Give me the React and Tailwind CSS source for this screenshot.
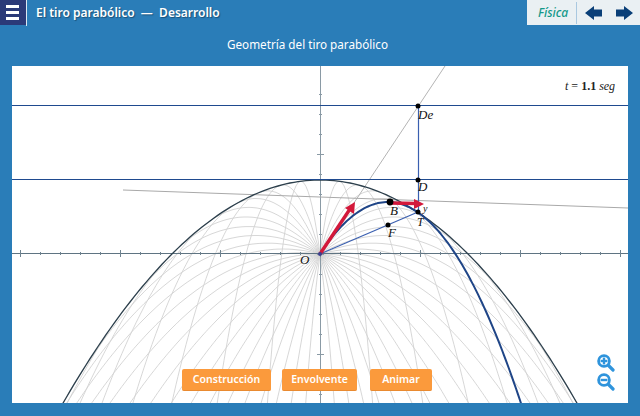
const OX = 320;
const OY = 254;
const H = 74;

// trajectory from the origin, launch angle in degrees
function trajectory(deg, dir = 1) {
  const t = (deg * Math.PI) / 180;
  const c = Math.cos(t);
  const pts = [];
  for (let x = 0; x <= 320; x += 2) {
    const y = x * Math.tan(t) - (x * x) / (4 * H * c * c);
    const py = OY - y;
    pts.push(`${(OX + dir * x).toFixed(1)} ${py.toFixed(1)}`);
    if (py > 410) break;
  }
  return 'M' + pts.join('L');
}

function envelope() {
  const pts = [];
  for (let x = -262; x <= 262; x += 4) {
    pts.push(`${OX + x} ${(OY - H + (x * x) / (4 * H)).toFixed(1)}`);
  }
  return 'M' + pts.join('L');
}

const angles = [];
for (let a = -82.5; a < 90; a += 7.5) angles.push(a);

const xTicks = [];
for (let x = 20; x <= 620; x += 20) xTicks.push(x);
const yTicks = [];
for (let y = 94; y <= 403; y += 20) yTicks.push(y);

function Parabolas() {
  return (
    <svg viewBox="12 66 616 337" className="block w-full h-full">
      {angles.map((a) => (
        <g key={a} fill="none" stroke="#d2d2d2" strokeWidth="0.9">
          <path d={trajectory(a, 1)} />
          <path d={trajectory(a, -1)} />
        </g>
      ))}
      <line x1="320.5" y1="66" x2="320.5" y2="403" stroke="#8a9aa5" strokeWidth="1" />
      <line x1="12" y1="253.5" x2="628" y2="253.5" stroke="#5f7482" strokeWidth="1" />
      {xTicks.map((x) => (
        <line key={x} x1={x + 0.5} x2={x + 0.5} y1={(x - 20) % 100 === 0 ? 250 : 252} y2={(x - 20) % 100 === 0 ? 257 : 255} stroke="#6f8390" strokeWidth="1" />
      ))}
      {yTicks.map((y) => (
        <line key={y} y1={y + 0.5} y2={y + 0.5} x1={(y - 54) % 100 === 0 ? 317 : 319} x2={(y - 54) % 100 === 0 ? 324 : 322} stroke="#8a9aa5" strokeWidth="1" />
      ))}

      <line x1="320" y1="254" x2="445" y2="66" stroke="#b4b4b4" strokeWidth="1" />
      <line x1="123" y1="190" x2="628" y2="208" stroke="#a9a9a9" strokeWidth="1" />

      <path d={envelope()} fill="none" stroke="#2c3f4c" strokeWidth="1.3" />

      <line x1="12" y1="105.5" x2="628" y2="105.5" stroke="#1f4a8f" strokeWidth="1.2" />
      <line x1="12" y1="179.5" x2="628" y2="179.5" stroke="#1f4a8f" strokeWidth="1.2" />
      <line x1="418.5" y1="106" x2="418.5" y2="212" stroke="#3a5fb0" strokeWidth="1.2" />
      <line x1="320" y1="254" x2="418" y2="212" stroke="#3a5fb0" strokeWidth="1.2" />

      <path d={trajectory(56.9)} fill="none" stroke="#1f4587" strokeWidth="2" />

      <line x1="320" y1="254" x2="350" y2="209" stroke="#d3183a" strokeWidth="3.4" />
      <path d="M355 202L354 214L345 208Z" fill="#d3183a" />
      <line x1="390" y1="203" x2="416" y2="203.5" stroke="#d3183a" strokeWidth="3.4" />
      <path d="M424 204L414 199L414 209Z" fill="#d3183a" />

      <circle cx="320" cy="254" r="2" fill="#3b3f8f" />
      <circle cx="390" cy="202" r="3.4" fill="#000" />
      <circle cx="418" cy="106" r="2.5" fill="#000" />
      <circle cx="418" cy="180" r="2.5" fill="#000" />
      <circle cx="418" cy="212" r="2.5" fill="#000" />
      <circle cx="388" cy="225" r="2.5" fill="#000" />

      <g fontFamily="'Liberation Serif', serif" fontStyle="italic" fontSize="13" fill="#111">
        <text x="300" y="264">O</text>
        <text x="418" y="119">De</text>
        <text x="418" y="191">D</text>
        <text x="390" y="215">B</text>
        <text x="388" y="237">F</text>
        <text x="417" y="226" fontSize="12">T</text>
        <text x="423" y="212" fontSize="10">y</text>
      </g>
      <text x="565" y="90" fontFamily="'Liberation Serif', serif" fontSize="12" fill="#222">
        <tspan fontStyle="italic">t</tspan>
        <tspan> = </tspan>
        <tspan fontWeight="700">1.1</tspan>
        <tspan fontStyle="italic"> seg</tspan>
      </text>
    </svg>
  );
}

function ZoomIcon({ plus }) {
  return (
    <svg width="18" height="18" viewBox="0 0 18 18" className="block">
      <circle cx="7" cy="7" r="5.4" fill="#fff" stroke="#2f94dc" strokeWidth="2.8" />
      <line x1="11.5" y1="11.5" x2="16" y2="16" stroke="#2f94dc" strokeWidth="3.2" strokeLinecap="round" />
      <line x1="3.6" y1="7" x2="10.4" y2="7" stroke="#2f94dc" strokeWidth="2.4" />
      {plus && <line x1="7" y1="3.6" x2="7" y2="10.4" stroke="#2f94dc" strokeWidth="2.4" />}
    </svg>
  );
}

function OrangeButton({ label, className }) {
  return (
    <button className={`h-[22px] rounded-[2px] bg-[#fb9a3c] text-white text-[10.5px] font-semibold border-b border-[#e98a30] ${className}`}>
      {label}
    </button>
  );
}

export default function App() {
  return (
    <div className="w-[640px] h-[416px] flex flex-col bg-[#2a7db8] overflow-hidden font-['Noto_Sans',sans-serif]">
      {/* Top bar */}
      <div className="h-[25px] flex items-stretch">
        <div className="w-[26px] bg-[#2b3a78] flex flex-col justify-center gap-[3px] pl-[6px]">
          <span className="block w-[13px] h-[3px] bg-white" />
          <span className="block w-[13px] h-[3px] bg-white" />
          <span className="block w-[13px] h-[3px] bg-white" />
        </div>
        <div className="w-px h-[26px] bg-[#dbe8f2]" />
        <div className="pl-[9px] flex items-center text-[12px] font-semibold text-white whitespace-pre [text-shadow:1px_1px_1px_rgba(0,0,0,0.35)]">
          El tiro parabólico  —  Desarrollo
        </div>
        <div className="ml-auto w-[113px] bg-[#eaf0f3] flex items-center">
          <span className="ml-[11px] text-[12px] italic font-medium text-[#15998a]">Física</span>
          <div className="ml-[8px] w-px h-[22px] bg-[#a9c8e0]" />
          <svg width="48" height="16" viewBox="0 0 48 16" className="ml-auto mr-[7px]">
            <path d="M0 8L9 1V4.5H17V11.5H9V15Z" fill="#0a3f78" />
            <path d="M48 8L39 1V4.5H31V11.5H39V15Z" fill="#0a3f78" />
          </svg>
        </div>
      </div>

      {/* Title */}
      <div className="h-[41px] flex items-center justify-center pb-[1px] pr-[25px] text-[11.7px] text-white">
        Geometría del tiro parabólico
      </div>

      {/* Canvas */}
      <div className="relative mx-3 w-[616px] h-[337px] bg-white">
        <Parabolas />
        <div className="absolute left-[170px] top-[303px] flex">
          <OrangeButton label="Construcción" className="w-[89px]" />
          <OrangeButton label="Envolvente" className="w-[75px] ml-[11px]" />
          <OrangeButton label="Animar" className="w-[62px] ml-[13px]" />
        </div>
        <div className="absolute left-[585px] top-[288px] flex flex-col gap-[1px]">
          <ZoomIcon plus />
          <ZoomIcon />
        </div>
      </div>
    </div>
  );
}
